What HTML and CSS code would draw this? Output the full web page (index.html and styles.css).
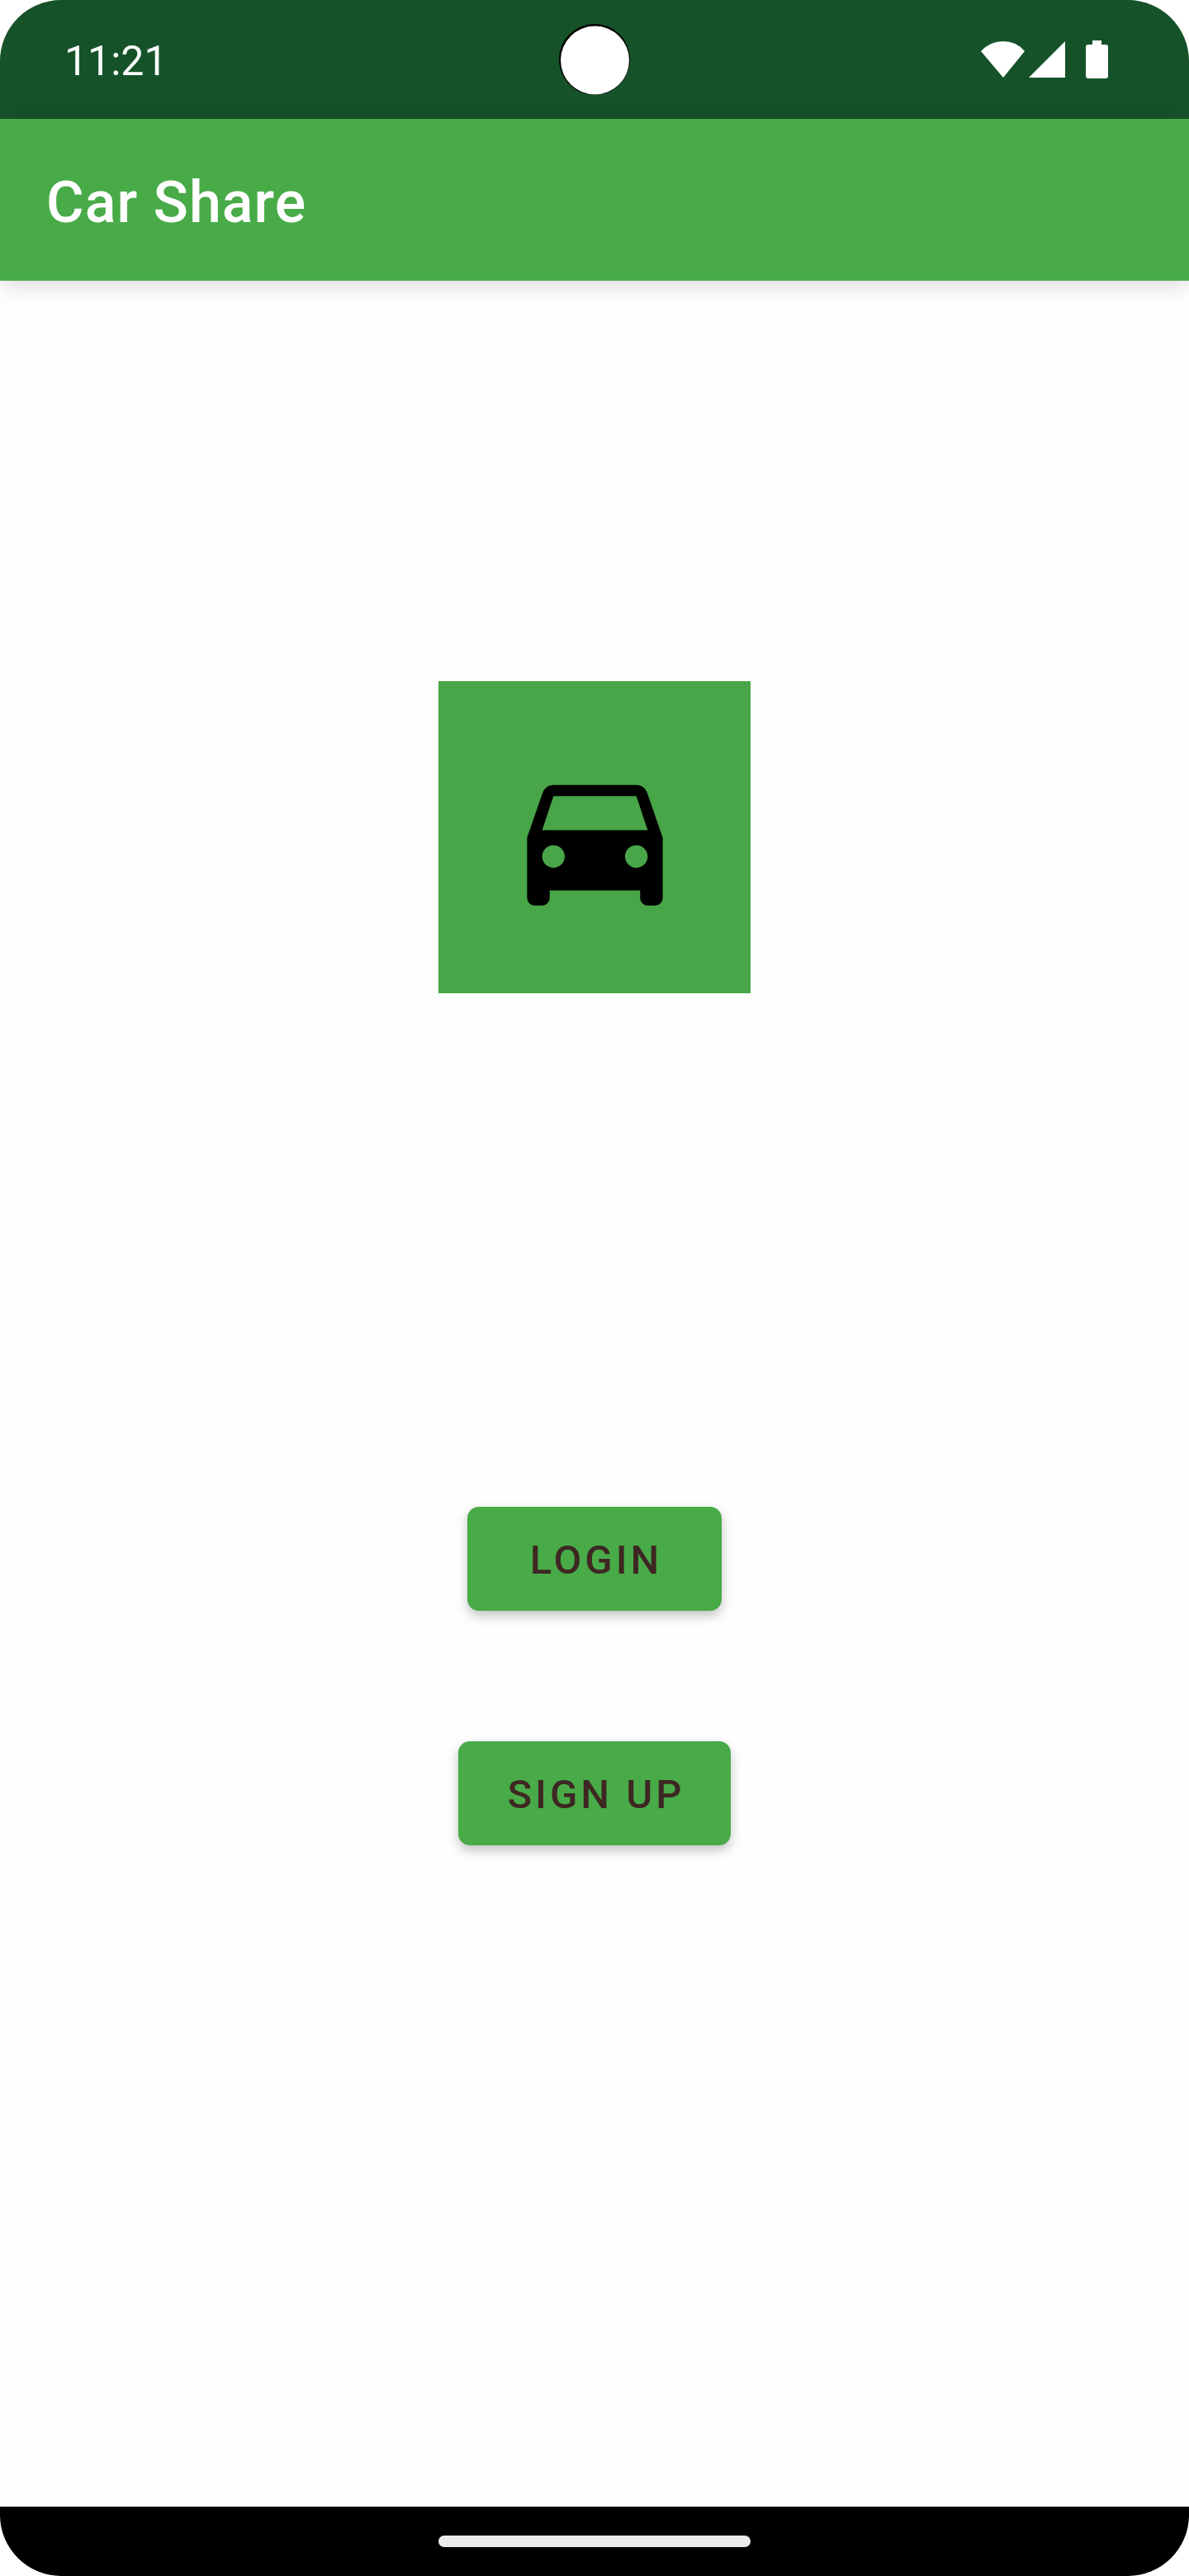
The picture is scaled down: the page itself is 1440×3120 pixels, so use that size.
FILE: index.html
```html
<!DOCTYPE html>
<html lang="en">
<head>
  <meta charset="utf-8">
  <meta name="viewport" content="width=device-width, initial-scale=1">
  <title>Car Share</title>
  <link rel="stylesheet" href="styles.css">
</head>
<body>
  <div class="screen">
    <div class="status-bar">
      <time class="clock">11:21</time>
      <svg class="camera" viewBox="0 0 86 86" aria-hidden="true">
        <circle cx="43" cy="43" r="43" fill="#000"/>
        <circle cx="43.5" cy="44" r="41.5" fill="#fff"/>
      </svg>
      <div class="indicators">
        <svg class="wifi" viewBox="0 0 54 44" role="img" aria-label="Wi-Fi">
          <path d="M0 12Q11 0 27 0T53 12L27 44Z"/>
        </svg>
        <svg class="signal" viewBox="0 0 44 44" role="img" aria-label="Signal">
          <path d="M44 0V44H0Z"/>
        </svg>
        <svg class="battery" viewBox="0 0 27 46" role="img" aria-label="Battery">
          <path d="M8 0H19V5H24Q27 5 27 8V43Q27 46 24 46H3Q0 46 0 43V8Q0 5 3 5H8Z"/>
        </svg>
      </div>
    </div>

    <header class="app-bar">
      <h1 class="app-title">Car Share</h1>
    </header>

    <main class="content">
      <div class="logo">
        <svg class="car" viewBox="0 0 24 24" role="img" aria-label="Car">
          <path d="M18.92 6.01C18.72 5.42 18.16 5 17.5 5h-11c-.66 0-1.21.42-1.42 1.01L3 12v8c0 .55.45 1 1 1h1c.55 0 1-.45 1-1v-1h12v1c0 .55.45 1 1 1h1c.55 0 1-.45 1-1v-8l-2.08-5.99zM6.5 16c-.83 0-1.5-.67-1.5-1.5S5.67 13 6.5 13s1.5.67 1.5 1.5S7.33 16 6.5 16zm11 0c-.83 0-1.5-.67-1.5-1.5s.67-1.5 1.5-1.5 1.5.67 1.5 1.5-.67 1.5-1.5 1.5zM5 11l1.5-4.5h11L19 11H5z"/>
        </svg>
      </div>
      <div class="actions">
        <button class="button" type="button">LOGIN</button>
        <button class="button" type="button">SIGN UP</button>
      </div>
    </main>

    <div class="nav-bar">
      <div class="nav-handle"></div>
    </div>
  </div>
</body>
</html>
```
FILE: styles.css
```css
:root {
  --primary: #48ab48;
  --primary-dark: #165229;
  --logo: #48a548;
  --on-button: #3e2723;
}

* {
  box-sizing: border-box;
}

body {
  margin: 0;
  background: #fff;
  font-family: Roboto, "Liberation Sans", sans-serif;
}

.screen {
  display: flex;
  flex-direction: column;
  min-height: 100vh;
  overflow: hidden;
  border-radius: 74px;
  background: #fefefe;
}

.status-bar {
  display: grid;
  grid-template-columns: 1fr auto 1fr;
  align-items: center;
  height: 144px;
  padding: 0 78px;
  background: var(--primary-dark);
  color: #fff;
}

.clock {
  padding-top: 4px;
  font-size: 50px;
  line-height: 60px;
}

.camera {
  width: 86px;
  height: 86px;
}

.indicators {
  display: flex;
  justify-content: flex-end;
  align-items: center;
  padding-right: 20px;
  fill: currentColor;
}

.wifi {
  width: 54px;
  height: 44px;
  margin-right: 4px;
}

.signal {
  width: 44px;
  height: 44px;
  margin-right: 25px;
}

.battery {
  width: 27px;
  height: 46px;
}

.app-bar {
  display: flex;
  align-items: center;
  height: 196px;
  padding: 6px 56px 0;
  background: var(--primary);
  box-shadow: 0 6px 24px rgba(0, 0, 0, 0.14);
  color: #fff;
}

.app-title {
  margin: 0;
  font-size: 70px;
  font-weight: 500;
  line-height: 82px;
  letter-spacing: 1px;
}

.content {
  flex: 1;
  display: flex;
  flex-direction: column;
  align-items: center;
  gap: 622px;
  padding: 485px 56px 200px;
}

.logo {
  display: grid;
  place-items: center;
  width: 378px;
  height: 378px;
  background: var(--logo);
}

.car {
  width: 219px;
  height: 219px;
}

.actions {
  display: flex;
  flex-direction: column;
  align-items: center;
  gap: 158px;
}

/* The extra left padding balances the letter spacing after the last letter. */
.button {
  min-width: 308px;
  height: 126px;
  padding: 4px 55px 0 59px;
  border: 0;
  border-radius: 14px;
  background: var(--primary);
  box-shadow: 0 6px 14px rgba(0, 0, 0, 0.24);
  color: var(--on-button);
  font-family: inherit;
  font-size: 49px;
  font-weight: 500;
  line-height: 58px;
  letter-spacing: 4px;
  cursor: pointer;
}

.nav-bar {
  display: flex;
  justify-content: center;
  align-items: center;
  height: 84px;
  background: #000;
}

.nav-handle {
  width: 378px;
  height: 14px;
  border-radius: 7px;
  background: #ebebeb;
}
```
